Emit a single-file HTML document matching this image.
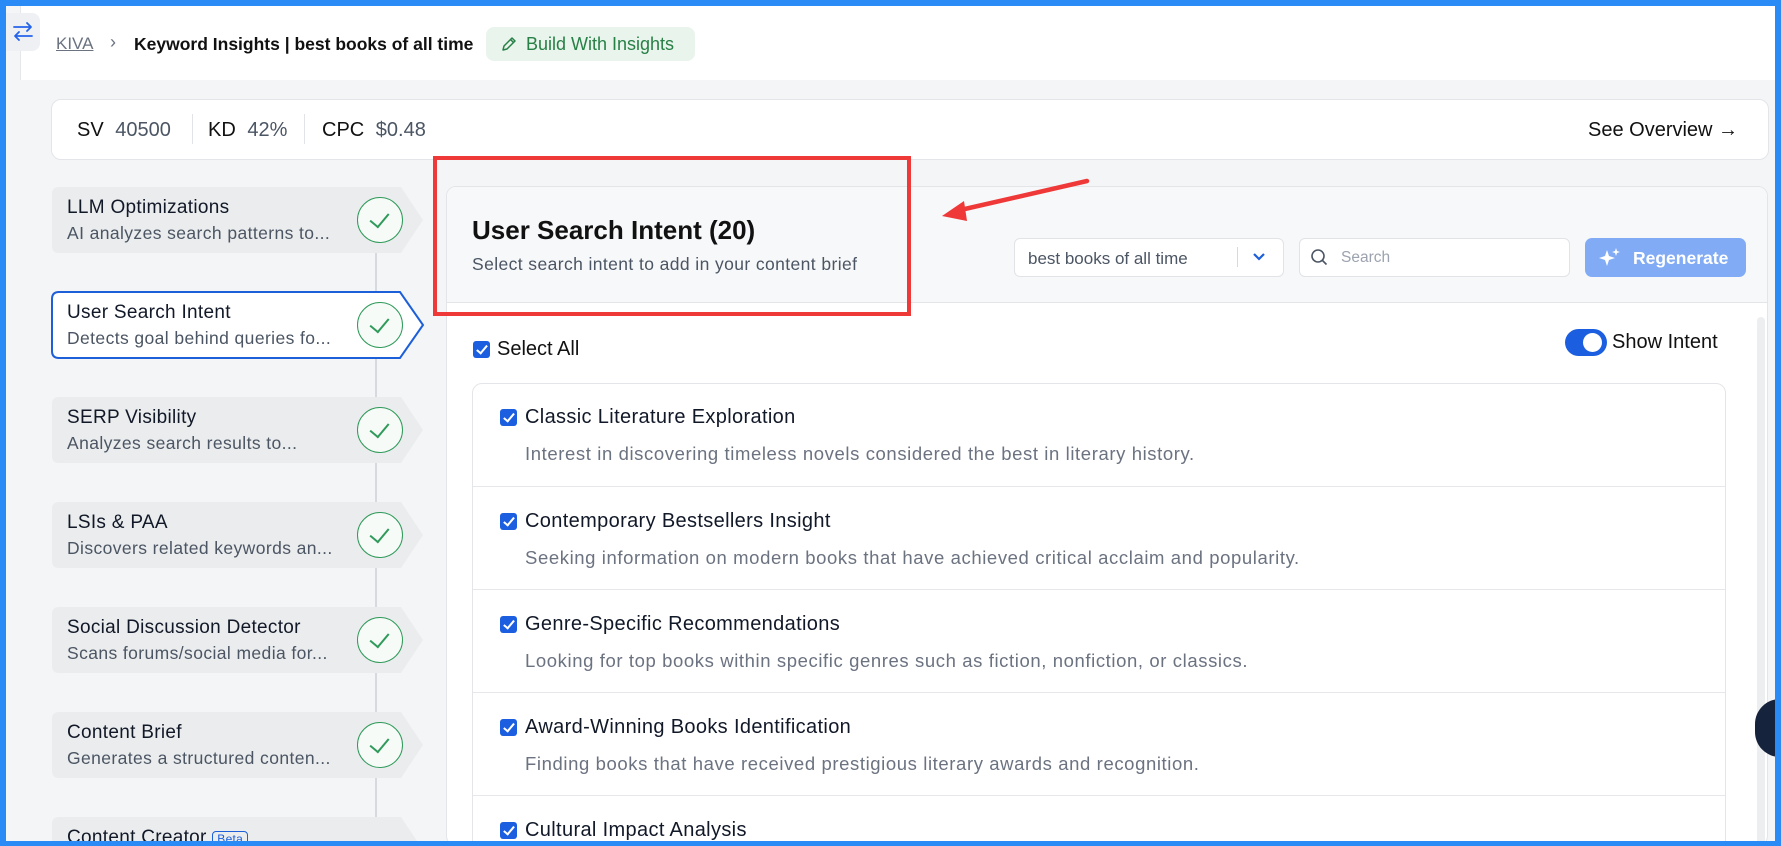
<!DOCTYPE html>
<html><head><meta charset="utf-8"><style>
*{box-sizing:border-box;margin:0;padding:0}
body{width:1781px;height:846px;overflow:hidden;background:#2a8af6;font-family:"Liberation Sans",sans-serif;color:#111827;position:relative}
.inner{position:absolute;left:6px;top:6px;width:1769px;height:835px;background:#f4f5f6;overflow:hidden}
.abs{position:absolute}
.hdr{left:14px;top:0;right:0;height:74px;background:#fff;border-left:1px solid #e5e7eb}
.tab{left:0;top:7px;width:34px;height:38px;background:#eef0f3;border-radius:0 8px 8px 0}
.side .it{position:absolute;left:45px;width:372px;height:68px}
.side svg{position:absolute;left:0;top:0}
.it .t{position:absolute;left:16px;top:11px;font-size:19px;letter-spacing:0.3px;color:#111827;white-space:nowrap}
.it .s{position:absolute;left:16px;top:37px;font-size:17.5px;letter-spacing:0.4px;color:#4b5563;white-space:nowrap}
.chk{position:absolute;left:306px;top:11px;width:46px;height:46px;border:1.5px solid #2f9a5a;border-radius:50%;background:#f6fbf8}
.chk:after{content:"";position:absolute;left:16px;top:11px;width:9px;height:16px;border-right:2px solid #2f9a5a;border-bottom:2px solid #2f9a5a;transform:rotate(40deg)}
.cb{position:absolute;width:17px;height:17px;background:#1b5fe0;border-radius:3px}
.cb:after{content:"";position:absolute;left:5.5px;top:2px;width:4px;height:9px;border-right:2px solid #fff;border-bottom:2px solid #fff;transform:rotate(40deg)}
.row{position:absolute;left:0;width:100%;height:103px;border-top:1px solid #e5e7eb}
.row .cb{left:27px;top:26px}
.row .t{position:absolute;left:52px;top:23px;font-size:20px;letter-spacing:0.35px;color:#111827}
.row .d{position:absolute;left:52px;top:60px;font-size:18.5px;letter-spacing:0.6px;color:#6b7280}
</style></head><body>
<div class="inner">
 <div class="abs hdr"></div>
 <div class="abs tab"><svg width="30" height="30" viewBox="0 0 30 30" style="position:absolute;left:2px;top:4px"><path d="M6 10h17M19 6l4 4-4 4M24 19H7M11 15l-4 4 4 4" stroke="#2563eb" stroke-width="1.8" fill="none" stroke-linecap="round" stroke-linejoin="round"/></svg></div>
 <div class="abs" style="left:50px;top:28px;font-size:17px;color:#6b7280;text-decoration:underline">KIVA</div>
 <div class="abs" style="left:104px;top:26px;font-size:18px;color:#6b7280">›</div>
 <div class="abs" style="left:128px;top:28px;font-size:17.5px;font-weight:bold;color:#111">Keyword Insights | best books of all time</div>
 <div class="abs" style="left:480px;top:21px;width:209px;height:34px;background:#e9f4ec;border-radius:8px;color:#278046;font-size:18px;padding:7px 0 0 40px">Build With Insights</div>
 <svg class="abs" style="left:494px;top:29px" width="18" height="18" viewBox="0 0 18 18"><path d="M3 15l1-4 8-8 3 3-8 8zM10.5 4.5l3 3" stroke="#278046" stroke-width="1.5" fill="none" stroke-linejoin="round"/></svg>

 <div class="abs" style="left:45px;top:93px;width:1718px;height:61px;background:#fff;border:1px solid #e3e5e8;border-radius:10px"></div>
 <div class="abs" style="left:71px;top:113px;font-size:20px;color:#111">SV <span style="color:#4b5563;margin-left:6px">40500</span></div>
 <div class="abs" style="left:186px;top:108px;width:1px;height:30px;background:#e1e3e6"></div>
 <div class="abs" style="left:202px;top:113px;font-size:20px;color:#111">KD <span style="color:#4b5563;margin-left:6px">42%</span></div>
 <div class="abs" style="left:298px;top:108px;width:1px;height:30px;background:#e1e3e6"></div>
 <div class="abs" style="left:316px;top:113px;font-size:20px;color:#111">CPC <span style="color:#4b5563;margin-left:6px">$0.48</span></div>
 <div class="abs" style="left:1582px;top:113px;font-size:20px;color:#111">See Overview →</div>

 <div class="abs" style="left:369px;top:200px;width:1.5px;height:640px;background:#d6d9dd"></div>
 <div class="side">
  <div class="it" style="top:180px"><svg width="380" height="70"><path d="M8 1H350 L372 34 L350 67 H8 Q1 67 1 60 V8 Q1 1 8 1Z" fill="#eaeced"/></svg><div class="t">LLM Optimizations</div><div class="s">AI analyzes search patterns to...</div><div class="chk"></div></div>
  <div class="it" style="top:285px"><svg width="380" height="70"><path d="M8 1H349 L372 34 L349 67 H8 Q1 67 1 60 V8 Q1 1 8 1Z" fill="#fff" stroke="#1d5fd8" stroke-width="2"/></svg><div class="t">User Search Intent</div><div class="s">Detects goal behind queries fo...</div><div class="chk"></div></div>
  <div class="it" style="top:390px"><svg width="380" height="70"><path d="M8 1H350 L372 34 L350 67 H8 Q1 67 1 60 V8 Q1 1 8 1Z" fill="#eaeced"/></svg><div class="t">SERP Visibility</div><div class="s">Analyzes search results to...</div><div class="chk"></div></div>
  <div class="it" style="top:495px"><svg width="380" height="70"><path d="M8 1H350 L372 34 L350 67 H8 Q1 67 1 60 V8 Q1 1 8 1Z" fill="#eaeced"/></svg><div class="t">LSIs &amp; PAA</div><div class="s">Discovers related keywords an...</div><div class="chk"></div></div>
  <div class="it" style="top:600px"><svg width="380" height="70"><path d="M8 1H350 L372 34 L350 67 H8 Q1 67 1 60 V8 Q1 1 8 1Z" fill="#eaeced"/></svg><div class="t">Social Discussion Detector</div><div class="s">Scans forums/social media for...</div><div class="chk"></div></div>
  <div class="it" style="top:705px"><svg width="380" height="70"><path d="M8 1H350 L372 34 L350 67 H8 Q1 67 1 60 V8 Q1 1 8 1Z" fill="#eaeced"/></svg><div class="t">Content Brief</div><div class="s">Generates a structured conten...</div><div class="chk"></div></div>
  <div class="it" style="top:810px"><svg width="380" height="70"><path d="M8 1H350 L372 34 L350 67 H8 Q1 67 1 60 V8 Q1 1 8 1Z" fill="#eaeced"/></svg><div class="t">Content Creator <span style="font-size:12px;color:#1d5fd8;border:1px solid #1d5fd8;border-radius:4px;padding:0 4px">Beta</span></div></div>
 </div>

 <div class="abs" style="left:440px;top:180px;width:1322px;height:660px;background:#fff;border:1px solid #e3e5e8;border-radius:10px;overflow:hidden">
  <div class="abs" style="left:0;top:0;width:100%;height:116px;background:#f7f8f9;border-bottom:1px solid #e3e5e8"></div>
  <div class="abs" style="left:25px;top:28px;font-size:26px;font-weight:bold;color:#111">User Search Intent (20)</div>
  <div class="abs" style="left:25px;top:67px;font-size:17.5px;letter-spacing:0.4px;color:#4b5563">Select search intent to add in your content brief</div>
  <div class="abs" style="left:567px;top:51px;width:270px;height:39px;background:#fff;border:1px solid #e1e3e6;border-radius:6px;font-size:17px;color:#4b5563;padding:10px 0 0 13px">best books of all time</div>
  <div class="abs" style="left:790px;top:60px;width:1px;height:20px;background:#d6d9dd"></div>
  <svg class="abs" style="left:804px;top:63px" width="16" height="14"><path d="M3 4l5 5 5-5" stroke="#1d5fd8" stroke-width="2.2" fill="none"/></svg>
  <div class="abs" style="left:852px;top:51px;width:271px;height:39px;background:#fff;border:1px solid #e1e3e6;border-radius:6px;font-size:15.5px;color:#9ca3af;padding:10px 0 0 41px">Search</div>
  <svg class="abs" style="left:863px;top:61px" width="20" height="20"><circle cx="8" cy="8" r="6" stroke="#4b5563" stroke-width="1.6" fill="none"/><path d="M12.5 12.5l4 4" stroke="#4b5563" stroke-width="1.6"/></svg>
  <div class="abs" style="left:1138px;top:51px;width:161px;height:39px;background:#82abf5;border-radius:7px;color:#fff;font-size:17.5px;font-weight:bold;padding:10px 0 0 48px">Regenerate</div>
  <svg class="abs" style="left:1152px;top:60px" width="22" height="22"><path d="M8 3l2 6 6 2-6 2-2 6-2-6-6-2 6-2z" fill="#fff"/><path d="M17 1l1 3 3 1-3 1-1 3-1-3-3-1 3-1z" fill="#fff"/></svg>

  <div class="cb" style="left:26px;top:154px"></div>
  <div class="abs" style="left:50px;top:151px;font-size:20px;color:#111">Select All</div>
  <div class="abs" style="left:1118px;top:142px;width:42px;height:27px;background:#1b5fe0;border-radius:14px"><div style="position:absolute;left:18px;top:4px;width:19px;height:19px;background:#fff;border-radius:50%"></div></div>
  <div class="abs" style="left:1165px;top:144px;font-size:20px;color:#111">Show Intent</div>
  <div class="abs" style="left:1310px;top:130px;width:8px;height:540px;background:#eceef0;border-radius:4px"></div>

  <div class="abs" style="left:25px;top:196px;width:1254px;height:500px;border:1px solid #e3e5e8;border-radius:10px;overflow:hidden">
   <div class="row" style="top:-1px;border-top:none"><div class="cb"></div><div class="t">Classic Literature Exploration</div><div class="d">Interest in discovering timeless novels considered the best in literary history.</div></div>
   <div class="row" style="top:102px"><div class="cb"></div><div class="t">Contemporary Bestsellers Insight</div><div class="d">Seeking information on modern books that have achieved critical acclaim and popularity.</div></div>
   <div class="row" style="top:205px"><div class="cb"></div><div class="t">Genre-Specific Recommendations</div><div class="d">Looking for top books within specific genres such as fiction, nonfiction, or classics.</div></div>
   <div class="row" style="top:308px"><div class="cb"></div><div class="t">Award-Winning Books Identification</div><div class="d">Finding books that have received prestigious literary awards and recognition.</div></div>
   <div class="row" style="top:411px"><div class="cb"></div><div class="t">Cultural Impact Analysis</div></div>
  </div>
 </div>
 <div class="abs" style="left:1749px;top:693px;width:50px;height:58px;background:#16233d;border-radius:25px"></div>

 <div class="abs" style="left:427px;top:150px;width:478px;height:160px;border:4.5px solid #ef3838"></div>
 <svg class="abs" style="left:928px;top:165px" width="160" height="60"><path d="M153 10L22 40" stroke="#ef3838" stroke-width="4.5" stroke-linecap="round"/><path d="M8 45L30 30L33 50Z" fill="#ef3838"/></svg>
</div>
</body></html>
